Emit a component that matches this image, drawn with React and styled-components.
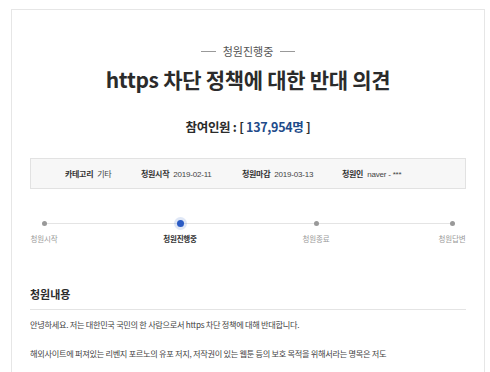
import React from "react";
import styled, { createGlobalStyle } from "styled-components";

const Global = createGlobalStyle`
  html, body {
    margin: 0;
    padding: 0;
    background: #fff;
  }
  body {
    font-family: "Noto Sans CJK KR", "Noto Sans", sans-serif;
    color: #333;
  }
`;

const Page = styled.div`
  padding: 9px 5px 0 11px;
  height: 372px;
  box-sizing: border-box;
  overflow: hidden;
`;

const Card = styled.div`
  border: 1px solid #e6e6e6;
  border-bottom: none;
  height: 100%;
  padding: 31px 18px 0 18px;
  box-sizing: border-box;
`;

const Status = styled.div`
  display: flex;
  align-items: center;
  justify-content: center;
  gap: 7px;
  font-size: 11px;
  color: #555;
  line-height: 20px;

  &::before,
  &::after {
    content: "";
    width: 15px;
    height: 1px;
    background: #999;
  }
`;

const Title = styled.h1`
  margin: 3px 0 0;
  text-align: center;
  font-size: 21px;
  font-weight: 700;
  color: #2b2b2b;
  line-height: 30px;
  letter-spacing: -0.3px;
`;

const Count = styled.div`
  margin-top: 23px;
  text-align: center;
  font-size: 12.5px;
  font-weight: 700;
  color: #2b2b2b;
  line-height: 20px;
  letter-spacing: -0.3px;
`;

const Num = styled.span`
  color: #1f4b8a;
`;

const InfoBox = styled.div`
  margin-top: 21px;
  height: 29px;
  background: #f7f7f7;
  border: 1px solid #e2e2e2;
  display: flex;
  align-items: center;
  padding-left: 34px;
`;

const InfoItem = styled.div`
  display: flex;
  align-items: baseline;
  gap: 4px;
  width: ${(p) => p.$w}px;
  flex: none;
`;

const Label = styled.span`
  font-size: 8px;
  font-weight: 700;
  color: #333;
  letter-spacing: -0.3px;
`;

const Value = styled.span`
  color: #444;
  font-family: ${(p) =>
    p.$ko ? '"Noto Sans CJK KR", sans-serif' : '"Liberation Sans", sans-serif'};
  font-size: 8px;
  letter-spacing: ${(p) => (p.$ko ? -0.3 : -0.2)}px;
`;

const Steps = styled.div`
  margin-top: 29px;
  position: relative;
  display: flex;
  justify-content: space-between;
`;

const Track = styled.div`
  position: absolute;
  left: 13px;
  right: 14px;
  top: 5px;
  height: 1px;
  background: #e4e4e4;
`;

const Step = styled.div`
  position: relative;
  display: flex;
  flex-direction: column;
  align-items: center;
  width: 28px;
  flex: none;
`;

const Dot = styled.span`
  width: ${(p) => (p.$on ? 7 : 5)}px;
  height: ${(p) => (p.$on ? 7 : 5)}px;
  border-radius: 50%;
  background: ${(p) => (p.$on ? "#2a5bc4" : "#999")};
  box-shadow: ${(p) => (p.$on ? "0 0 0 3px rgba(42,91,196,0.15)" : "none")};
  margin-top: ${(p) => (p.$on ? 2 : 3)}px;
`;

const StepText = styled.span`
  margin-top: ${(p) => (p.$on ? 6 : 7)}px;
  white-space: nowrap;
  font-size: 7.5px;
  letter-spacing: -0.2px;
  color: ${(p) => (p.$on ? "#333" : "#999")};
  font-weight: ${(p) => (p.$on ? 700 : 400)};
`;

const Section = styled.h2`
  margin: 39px 0 0;
  font-size: 11px;
  font-weight: 700;
  color: #2b2b2b;
  line-height: 22px;
  padding-bottom: 4px;
  border-bottom: 1px solid #e4e4e4;
`;

const Para = styled.p`
  margin: ${(p) => p.$mt}px 0 0;
  font-size: 8.2px;
  color: #444;
  line-height: 16px;
  letter-spacing: -0.3px;
`;

const steps = [
  { t: "청원시작" },
  { t: "청원진행중", on: true },
  { t: "청원종료" },
  { t: "청원답변" },
];

export default function App() {
  return (
    <>
      <Global />
      <Page>
        <Card>
          <Status>청원진행중</Status>
          <Title>https 차단 정책에 대한 반대 의견</Title>
          <Count>
            참여인원 : [ <Num>137,954명</Num> ]
          </Count>
          <InfoBox>
            <InfoItem $w={76}>
              <Label>카테고리</Label>
              <Value $ko>기타</Value>
            </InfoItem>
            <InfoItem $w={101}>
              <Label>청원시작</Label>
              <Value>2019-02-11</Value>
            </InfoItem>
            <InfoItem $w={100}>
              <Label>청원마감</Label>
              <Value>2019-03-13</Value>
            </InfoItem>
            <InfoItem $w={80}>
              <Label>청원인</Label>
              <Value>naver - ***</Value>
            </InfoItem>
          </InfoBox>
          <Steps>
            <Track />
            {steps.map((s) => (
              <Step key={s.t}>
                <Dot $on={s.on} />
                <StepText $on={s.on}>{s.t}</StepText>
              </Step>
            ))}
          </Steps>
          <Section>청원내용</Section>
          <Para $mt={6}>
            안녕하세요. 저는 대한민국 국민의 한 사람으로서 https 차단 정책에 대해 반대합니다.
          </Para>
          <Para $mt={13}>
            해외사이트에 퍼져있는 리벤지 포르노의 유포 저지, 저작권이 있는 웹툰 등의 보호 목적을 위해서라는 명목은 저도
          </Para>
        </Card>
      </Page>
    </>
  );
}
